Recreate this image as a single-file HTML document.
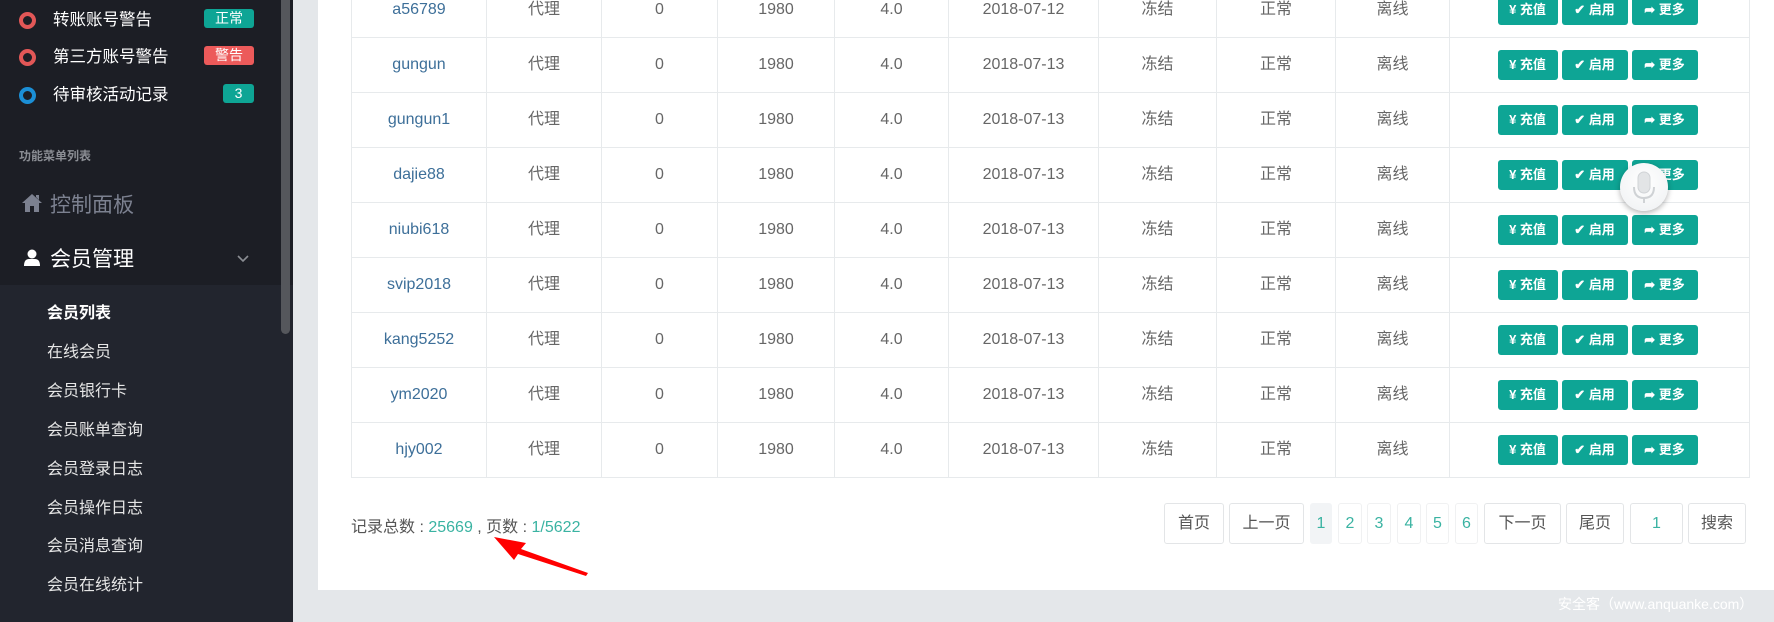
<!DOCTYPE html>
<html><head><meta charset="utf-8">
<style>
*{margin:0;padding:0;box-sizing:border-box}
body{width:1774px;height:622px;overflow:hidden;position:relative;background:#e4e7ea;font-family:"Liberation Sans","Noto Sans CJK SC",sans-serif}
.a{position:absolute}
#side{left:0;top:0;width:293px;height:622px;background:#1c1e25}
#sub{left:0;top:285px;width:293px;height:337px;background:#22252e}
.sb{left:281px;top:0;width:9px;height:334px;background:#55575c;border-radius:0 0 5px 5px}
.t1{color:#fff;font-size:16.5px;left:53px;line-height:22px}
.ring{width:17px;height:17px;border-radius:50%;border:4px solid #e25757;left:19px}
.badge{color:#fff;font-size:14px;text-align:center;border-radius:3px;line-height:19px;height:19px}
.si{left:47px;color:#e6e6e6;font-size:16px;line-height:22px}
#main{left:318px;top:0;width:1456px;height:590px;background:#fff}
table{position:absolute;left:351px;top:-18px;border-collapse:collapse;table-layout:fixed}
td{border:1px solid #e7eaec;height:55px;text-align:center;color:#666;font-size:16px;padding:0}
td.u{color:#3d6f99}
td span.c{position:relative;top:-3px}
.btn{display:inline-block;background:#0ea595;color:#fff;font-size:13px;height:30px;line-height:30px;border-radius:3px;vertical-align:middle;margin-right:4px;font-weight:bold}
.pg{top:503px;height:41px;border:1px solid #e3e5e7;border-radius:3px;background:#fff;text-align:center;line-height:39px;font-size:16px;color:#555}
.pg.n{color:#3ab3a2}
</style></head><body>
<div id="side" class="a"></div>
<div id="sub" class="a"></div>
<div class="a sb"></div>

<div class="a ring" style="top:12px"></div>
<div class="a t1" style="top:9px">转账账号警告</div>
<div class="a badge" style="left:204px;top:9px;width:50px;background:#0ea595">正常</div>
<div class="a ring" style="top:49px"></div>
<div class="a t1" style="top:46px">第三方账号警告</div>
<div class="a badge" style="left:204px;top:46px;width:50px;background:#ec5a5a">警告</div>
<div class="a ring" style="top:87px;border-color:#1b8fd6"></div>
<div class="a t1" style="top:84px">待审核活动记录</div>
<div class="a badge" style="left:223px;top:84px;width:31px;background:#0ea595">3</div>

<div class="a" style="left:19px;top:147px;font-size:12px;color:#8a8d93;font-weight:bold">功能菜单列表</div>
<svg class="a" style="left:22px;top:194px" width="20" height="18" viewBox="0 0 20 18"><path d="M10 0 L20 9 L17 9 L17 18 L12 18 L12 12 L8 12 L8 18 L3 18 L3 9 L0 9 Z M14 1 h3 v5 l-3-3z" fill="#7c8190"/></svg>
<div class="a" style="left:50px;top:189px;font-size:21px;color:#7c8190">控制面板</div>
<svg class="a" style="left:24px;top:249px" width="16" height="17" viewBox="0 0 16 17"><circle cx="8" cy="5" r="4.5" fill="#fff"/><path d="M0 17 Q0 10 5 10 L11 10 Q16 10 16 17Z" fill="#fff"/></svg>
<div class="a" style="left:50px;top:243px;font-size:21px;color:#fff">会员管理</div>
<svg class="a" style="left:237px;top:255px" width="12" height="8" viewBox="0 0 12 8"><path d="M1 1 L6 6 L11 1" stroke="#8a8d93" stroke-width="1.6" fill="none"/></svg>

<div class="a si" style="top:303px;font-weight:bold;color:#fff">会员列表</div>
<div class="a si" style="top:342px">在线会员</div>
<div class="a si" style="top:381px">会员银行卡</div>
<div class="a si" style="top:420px">会员账单查询</div>
<div class="a si" style="top:459px">会员登录日志</div>
<div class="a si" style="top:498px">会员操作日志</div>
<div class="a si" style="top:536px">会员消息查询</div>
<div class="a si" style="top:575px">会员在线统计</div>

<div id="main" class="a"></div>
<table>
<colgroup><col style="width:135px"><col style="width:115px"><col style="width:116px"><col style="width:117px"><col style="width:114px"><col style="width:150px"><col style="width:118px"><col style="width:119px"><col style="width:114px"><col style="width:300px"></colgroup>
<tbody>
<tr><td class="u">a56789</td><td><span class="c">代理</span></td><td>0</td><td>1980</td><td>4.0</td><td>2018-07-12</td><td><span class="c">冻结</span></td><td><span class="c">正常</span></td><td><span class="c">离线</span></td><td><span class="btn" style="width:60px">¥ 充值</span><span class="btn" style="width:66px">✔ 启用</span><span class="btn" style="width:66px">➦ 更多</span></td></tr>
<tr><td class="u">gungun</td><td><span class="c">代理</span></td><td>0</td><td>1980</td><td>4.0</td><td>2018-07-13</td><td><span class="c">冻结</span></td><td><span class="c">正常</span></td><td><span class="c">离线</span></td><td><span class="btn" style="width:60px">¥ 充值</span><span class="btn" style="width:66px">✔ 启用</span><span class="btn" style="width:66px">➦ 更多</span></td></tr>
<tr><td class="u">gungun1</td><td><span class="c">代理</span></td><td>0</td><td>1980</td><td>4.0</td><td>2018-07-13</td><td><span class="c">冻结</span></td><td><span class="c">正常</span></td><td><span class="c">离线</span></td><td><span class="btn" style="width:60px">¥ 充值</span><span class="btn" style="width:66px">✔ 启用</span><span class="btn" style="width:66px">➦ 更多</span></td></tr>
<tr><td class="u">dajie88</td><td><span class="c">代理</span></td><td>0</td><td>1980</td><td>4.0</td><td>2018-07-13</td><td><span class="c">冻结</span></td><td><span class="c">正常</span></td><td><span class="c">离线</span></td><td><span class="btn" style="width:60px">¥ 充值</span><span class="btn" style="width:66px">✔ 启用</span><span class="btn" style="width:66px">➦ 更多</span></td></tr>
<tr><td class="u">niubi618</td><td><span class="c">代理</span></td><td>0</td><td>1980</td><td>4.0</td><td>2018-07-13</td><td><span class="c">冻结</span></td><td><span class="c">正常</span></td><td><span class="c">离线</span></td><td><span class="btn" style="width:60px">¥ 充值</span><span class="btn" style="width:66px">✔ 启用</span><span class="btn" style="width:66px">➦ 更多</span></td></tr>
<tr><td class="u">svip2018</td><td><span class="c">代理</span></td><td>0</td><td>1980</td><td>4.0</td><td>2018-07-13</td><td><span class="c">冻结</span></td><td><span class="c">正常</span></td><td><span class="c">离线</span></td><td><span class="btn" style="width:60px">¥ 充值</span><span class="btn" style="width:66px">✔ 启用</span><span class="btn" style="width:66px">➦ 更多</span></td></tr>
<tr><td class="u">kang5252</td><td><span class="c">代理</span></td><td>0</td><td>1980</td><td>4.0</td><td>2018-07-13</td><td><span class="c">冻结</span></td><td><span class="c">正常</span></td><td><span class="c">离线</span></td><td><span class="btn" style="width:60px">¥ 充值</span><span class="btn" style="width:66px">✔ 启用</span><span class="btn" style="width:66px">➦ 更多</span></td></tr>
<tr><td class="u">ym2020</td><td><span class="c">代理</span></td><td>0</td><td>1980</td><td>4.0</td><td>2018-07-13</td><td><span class="c">冻结</span></td><td><span class="c">正常</span></td><td><span class="c">离线</span></td><td><span class="btn" style="width:60px">¥ 充值</span><span class="btn" style="width:66px">✔ 启用</span><span class="btn" style="width:66px">➦ 更多</span></td></tr>
<tr><td class="u">hjy002</td><td><span class="c">代理</span></td><td>0</td><td>1980</td><td>4.0</td><td>2018-07-13</td><td><span class="c">冻结</span></td><td><span class="c">正常</span></td><td><span class="c">离线</span></td><td><span class="btn" style="width:60px">¥ 充值</span><span class="btn" style="width:66px">✔ 启用</span><span class="btn" style="width:66px">➦ 更多</span></td></tr>
</tbody></table>

<div class="a" style="left:1620px;top:163px;width:48px;height:48px;border-radius:50%;background:radial-gradient(circle at 50% 40%,#fff,#eef0f2);box-shadow:0 2px 6px rgba(0,0,0,.3)"></div>
<svg class="a" style="left:1630px;top:170px" width="28" height="36" viewBox="0 0 28 36"><rect x="8" y="2" width="12" height="21" rx="6" fill="#e2e4e6" stroke="#d0d3d6"/><path d="M4 17 Q4 28 14 28 Q24 28 24 17" stroke="#cfd2d5" stroke-width="2" fill="none"/><line x1="14" y1="28" x2="14" y2="33" stroke="#cfd2d5" stroke-width="2"/></svg>

<div class="a" style="left:351px;top:513px;font-size:16px;color:#555">记录总数 : <span style="color:#3ab3a2">25669</span> , 页数 : <span style="color:#3ab3a2">1/5622</span></div>

<div class="a pg" style="left:1164px;width:60px">首页</div>
<div class="a pg" style="left:1229px;width:75px">上一页</div>
<div class="a pg n" style="left:1310px;width:22px;background:#f2f4f6;border-color:#f2f4f6">1</div>
<div class="a pg n" style="left:1338px;width:24px;border-color:#f0f1f2">2</div>
<div class="a pg n" style="left:1367px;width:24px;border-color:#f0f1f2">3</div>
<div class="a pg n" style="left:1397px;width:24px;border-color:#f0f1f2">4</div>
<div class="a pg n" style="left:1426px;width:23px;border-color:#f0f1f2">5</div>
<div class="a pg n" style="left:1455px;width:23px;border-color:#f0f1f2">6</div>
<div class="a pg" style="left:1484px;width:77px">下一页</div>
<div class="a pg" style="left:1566px;width:58px">尾页</div>
<div class="a pg n" style="left:1630px;width:53px">1</div>
<div class="a pg" style="left:1688px;width:58px">搜索</div>

<svg class="a" style="left:480px;top:525px" width="120" height="60" viewBox="0 0 120 60"><path d="M14 12 L46 18 L41 24 L108 48 L106 51 L38 29 L34 35 Z" fill="#f00"/></svg>

<div class="a" style="left:1558px;top:594px;font-size:14px;color:#fff">安全客（www.anquanke.com）</div>
</body></html>
